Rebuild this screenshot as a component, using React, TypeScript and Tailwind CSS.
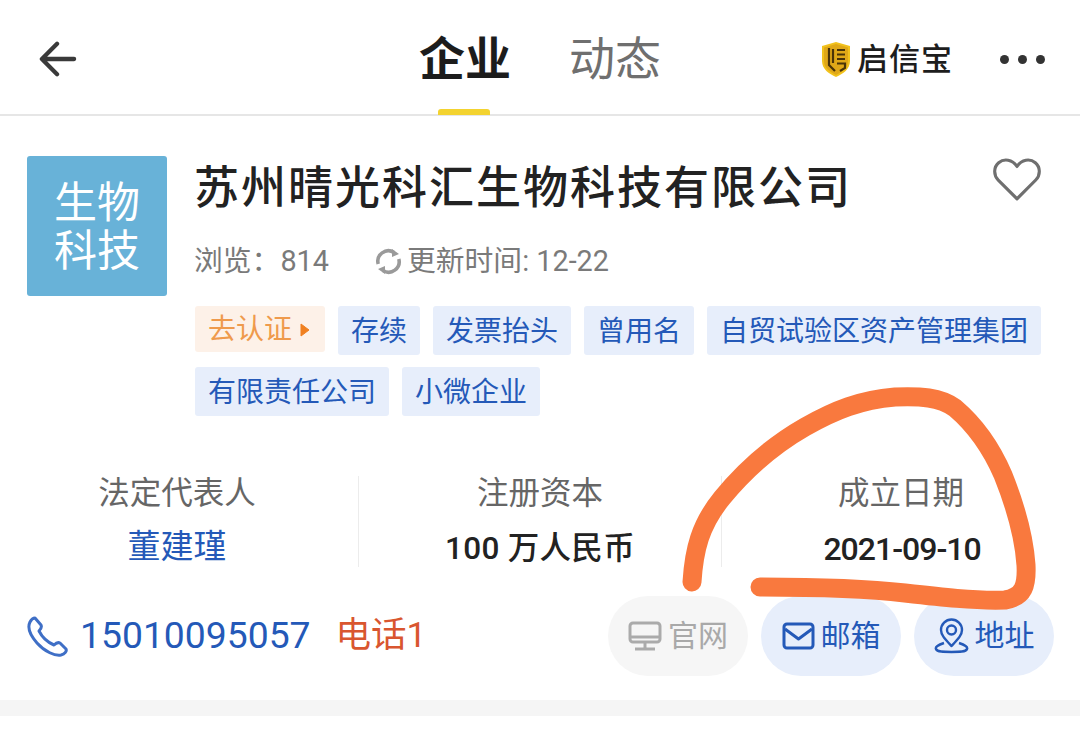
import type { ReactNode } from 'react';

const tagRows = [
  ['存续', '发票抬头', '曾用名', '自贸试验区资产管理集团'],
  ['有限责任公司', '小微企业'],
];

function Tag({ text }: { text: string }) {
  return (
    <span className="flex h-[49px] items-center rounded-[3px] bg-[#e7eefb] px-[13px] pt-[2px] text-[28px] leading-none text-[#2459b8]">
      {text}
    </span>
  );
}

function Shield() {
  return (
    <svg width="30" height="37" viewBox="0 0 30 37">
      <path d="M15 1 L29 5 V20 C29 28 22 33 15 36 C8 33 1 28 1 20 V5 Z" fill="#f2c21c" />
      <path d="M15 3 L27 6.5 V20 C27 27 21 31 15 34 C9 31 3 27 3 20 V6.5 Z" fill="#e0a818" />
      <path d="M8 7 V24 L14 30 M12 8 V22 M16 9 H24 M16 13.5 H24 M16 18 H24 M16 22.5 H24 V27 L19 30" fill="none" stroke="#4a3408" strokeWidth="2.2" />
    </svg>
  );
}

function Stat({ label, value, valueClass, first }: { label: string; value: string; valueClass: string; first?: boolean }) {
  return (
    <div className={`flex h-[91px] flex-col items-center ${first ? 'pr-[4px]' : 'border-l border-[#ececec]'}`}>
      <span className="text-[31.5px] leading-[36px] text-[#666666]">{label}</span>
      <span className={`leading-[38px] ${valueClass}`}>{value}</span>
    </div>
  );
}

function ActionButton({ text, icon, muted }: { text: string; icon: ReactNode; muted?: boolean }) {
  return (
    <div
      className={`flex h-[80px] w-[140px] items-center justify-center gap-[6px] rounded-[40px] text-[30px] ${
        muted ? 'bg-[#f6f6f6] text-[#a9a9a9]' : 'bg-[#e7eefb] text-[#2459b8]'
      }`}
    >
      {icon}
      <span className="leading-none">{text}</span>
    </div>
  );
}

export default function App() {
  return (
    <div className="relative h-[744px] w-[1080px] overflow-hidden bg-white font-['Roboto','Noto_Sans_CJK_SC',sans-serif]">
      {/* Header */}
      <header className="relative flex h-[116px] items-center border-b-2 border-[#e6e6e6] pt-[4px]">
        <svg className="ml-[39px]" width="38" height="36" viewBox="0 0 40 38" fill="none" stroke="#3a3a3a" strokeWidth="4.5" strokeLinecap="round" strokeLinejoin="round">
          <path d="M37 19 H4 M19 3 L3 19 L19 35" />
        </svg>
        <div className="ml-[342px] flex items-center gap-[58px]">
          <span className="relative text-[46px] font-bold leading-none text-[#1c1c1c]">企业</span>
          <span className="text-[46px] leading-none text-[#6f6f6f]">动态</span>
        </div>
        <div className="ml-[160px] flex items-center gap-[6px]">
          <Shield />
          <span className="text-[31px] font-medium leading-none tracking-[1px] text-[#1d1d1d]">启信宝</span>
        </div>
        <div className="ml-[47px] flex gap-[9px]">
          <span className="h-[9px] w-[9px] rounded-full bg-[#333333]" />
          <span className="h-[9px] w-[9px] rounded-full bg-[#333333]" />
          <span className="h-[9px] w-[9px] rounded-full bg-[#333333]" />
        </div>
        <span className="absolute bottom-[-1px] left-[438px] h-[6px] w-[52px] rounded-t-[3px] bg-[#f3d330]" />
      </header>

      {/* Company */}
      <section className="flex pl-[27px] pt-[40px]">
        <div className="flex h-[140px] w-[140px] shrink-0 items-center justify-center rounded-[3px] bg-[#68b2d8] pt-[1px] text-center text-[43px] leading-[48px] text-white">
          生物
          <br />
          科技
        </div>
        <div className="ml-[28px] flex-1">
          <div className="flex items-start justify-between pr-[38px]">
            <h1 className="ml-[-1px] mt-[3px] text-[45px] font-medium leading-[60px] tracking-[2px] text-[#222222]">苏州晴光科汇生物科技有限公司</h1>
            <svg width="50" height="46" viewBox="0 0 24 22" fill="none" stroke="#6f6f6f" strokeWidth="1.5" strokeLinejoin="round">
              <path d="M12 20.5 L3 11.5 C0.6 9 0.8 5.2 3.2 3.2 C5.8 1 9.8 1.6 12 5 C14.2 1.6 18.2 1 20.8 3.2 C23.2 5.2 23.4 9 21 11.5 Z" />
            </svg>
          </div>
          <div className="ml-[-1px] mt-[25px] flex h-[34px] items-center text-[28.8px] leading-none text-[#7a7a7a]">
            <span>浏览：814</span>
            <svg className="ml-[46px] mr-[5px]" width="27" height="27" viewBox="0 0 27 27" fill="none" stroke="#9a9a9a" strokeWidth="3.6">
              <path d="M3.2 16 A10.5 10.5 0 0 1 19 4.5" />
              <path d="M23.8 11 A10.5 10.5 0 0 1 8 22.5" />
              <path d="M17 1 L24 6 L17 9 Z M10 26 L3 21 L10 18 Z" fill="#9a9a9a" stroke="none" />
            </svg>
            <span>更新时间: 12-22</span>
          </div>
          <div className="mt-[28px] flex flex-col gap-[12px]">
            <div className="flex gap-[13px]">
              <span className="flex h-[46px] items-center rounded-[3px] bg-[#fdf1e8] pl-[13px] pr-[14px] pt-[1px] text-[28px] leading-none text-[#ef9a4c]">
                去认证
                <svg className="ml-[7px]" width="12" height="16" viewBox="0 0 12 16">
                  <path d="M2 2 L10 8 L2 14 Z" fill="#f08020" stroke="#f08020" strokeLinejoin="round" />
                </svg>
              </span>
              {tagRows[0].map((t) => (
                <Tag key={t} text={t} />
              ))}
            </div>
            <div className="flex gap-[13px]">
              {tagRows[1].map((t) => (
                <Tag key={t} text={t} />
              ))}
            </div>
          </div>
        </div>
      </section>

      {/* Stats */}
      <section className="mt-[60px] grid grid-cols-[358px_363px_359px]">
        <Stat first label="法定代表人" value="董建瑾" valueClass="mt-[16px] text-[33px] text-[#2459b8]" />
        <Stat label="注册资本" value="100 万人民币" valueClass="mt-[18px] text-[31.5px] font-medium tracking-[0.3px] text-[#222222]" />
        <Stat label="成立日期" value="2021-09-10" valueClass="ml-[2px] mt-[18px] text-[32px] font-medium tracking-[-1px] text-[#222222]" />
      </section>

      {/* Contact */}
      <section className="mt-[29px] flex items-center pl-[27px] pr-[26px]">
        <svg width="41" height="41" viewBox="0 0 41 41" fill="none" stroke="#3f6fc6" strokeWidth="3" strokeLinejoin="round">
          <path d="M8 2 L14 9 C15 11 14 13 12 15 C15 21 20 26 27 29 C29 27 31 26 33 27 L39 33 C40 35 38 38 34 39 C28 40 18 36 10 27 C3 19 0 12 3 6 C4 4 6 2 8 2 Z" />
        </svg>
        <span className="ml-[12px] text-[37.3px] leading-none text-[#2459b8]">15010095057</span>
        <span className="ml-[25px] text-[35.5px] leading-none text-[#d9562f]">电话1</span>
        <div className="ml-auto flex gap-[13px]">
          <ActionButton
            muted
            text="官网"
            icon={
              <svg width="34" height="30" viewBox="0 0 34 30" fill="none" stroke="#ababab" strokeWidth="3" strokeLinejoin="round">
                <rect x="2" y="2" width="30" height="19" rx="3" />
                <path d="M2 16 H32 M17 21 V27 M7 28 H27" />
              </svg>
            }
          />
          <ActionButton
            text="邮箱"
            icon={
              <svg width="33" height="28" viewBox="0 0 33 28" fill="none" stroke="#2459b8" strokeWidth="3" strokeLinejoin="round">
                <rect x="2" y="2" width="29" height="24" rx="3" />
                <path d="M3 7 L16.5 17 L30 7" />
              </svg>
            }
          />
          <ActionButton
            text="地址"
            icon={
              <svg width="35" height="36" viewBox="0 0 35 36" fill="none" stroke="#2459b8" strokeWidth="2.4" strokeLinejoin="round">
                <path d="M17.5 28 C11 21 7 17 7 12 A10.5 10.5 0 0 1 28 12 C28 17 24 21 17.5 28 Z" />
                <circle cx="17.5" cy="12" r="4.5" />
                <path d="M10 25 C4 27 1 29 2 31 C3 34 10 34 17.5 34 C25 34 32 34 33 31 C34 29 31 27 25 25" />
              </svg>
            }
          />
        </div>
      </section>

      <div className="mt-[24px] h-[16px] bg-[#f5f5f5]" />

      {/* Hand-drawn annotation */}
      <svg className="pointer-events-none absolute left-0 top-0" width="1080" height="744" viewBox="0 0 1080 744" fill="none">
        <path
          d="M692 582 C694 550 700 525 722 498 C745 470 770 447 805 427 C835 410 860 400 895 397 C920 396 940 397 955 408 C975 425 990 445 1003 475 C1015 505 1024 535 1026 565 C1027 585 1024 597 1005 600 C975 601 940 597 905 593 C870 589 815 587 760 587"
          stroke="#f9793e"
          strokeWidth="19"
          strokeLinecap="round"
          strokeLinejoin="round"
        />
      </svg>
    </div>
  );
}
